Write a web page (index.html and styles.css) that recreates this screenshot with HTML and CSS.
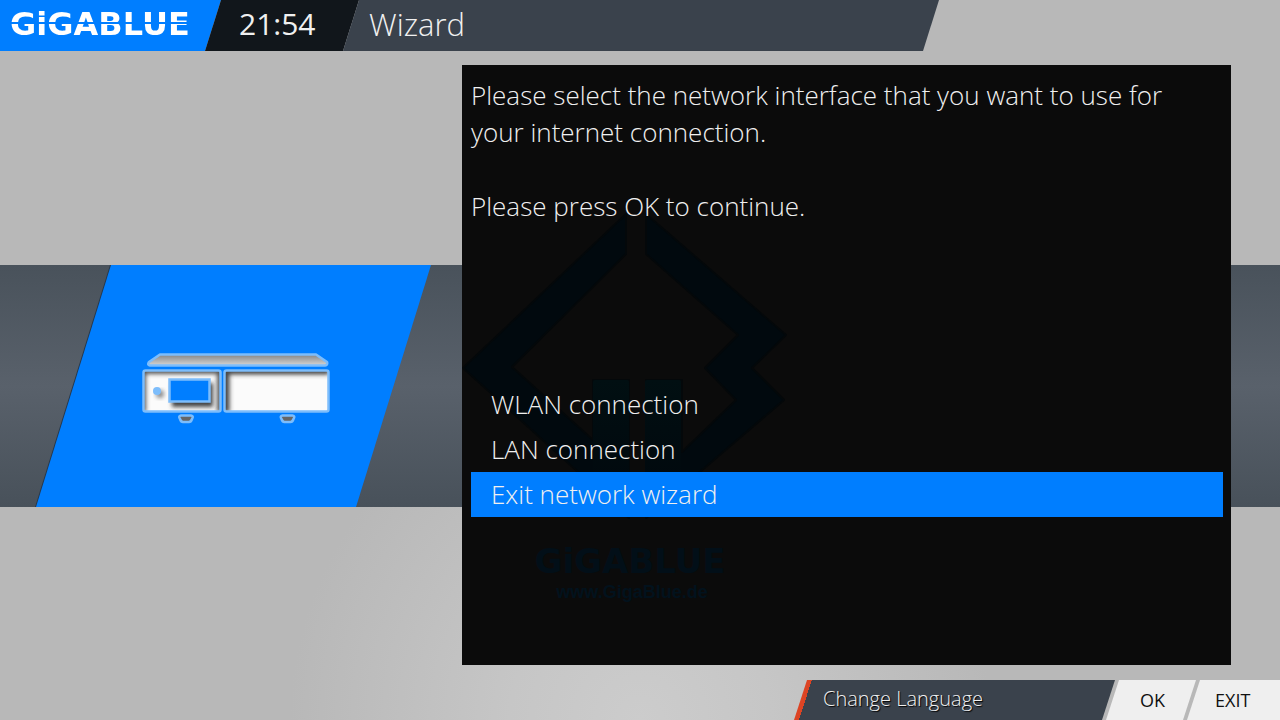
FILE: index.html
```html
<!DOCTYPE html>
<html lang="en">
    <head>
        <meta charset="UTF-8" />
        <title>GigaBlue - Wizard</title>
        <link rel="stylesheet" href="styles.css">
    </head>
    <body>
        <header class="topbar">
            <div class="brand"><span class="brand-name">GiGABLUE</span></div>
            <time class="clock">21:54</time>
            <h1 class="title">Wizard</h1>
        </header>

        <main class="stage">
            <div class="band">
                <div class="tile-edge">
                    <div class="tile">
                        <!-- Receiver -->
                        <svg class="receiver" width="190" height="74" viewBox="142 352 190 74">
                            <defs>
                                <linearGradient id="lid" x1="0" y1="0" x2="0" y2="1">
                                    <stop offset="0" stop-color="#858585" />
                                    <stop offset="1" stop-color="#d6d6d6" />
                                </linearGradient>
                                <filter id="soft" x="-30%" y="-30%" width="160%" height="160%">
                                    <feGaussianBlur stdDeviation="2" />
                                </filter>
                                <clipPath id="left"><rect x="144" y="371" width="77" height="41" /></clipPath>
                                <clipPath id="right"><rect x="226" y="371" width="103" height="41" /></clipPath>
                            </defs>
                            <path d="M161 355.500H317L328 363Q329 366 326 366.500H151Q148 366 150 363Z" fill="url(#lid)" stroke="#7dbdfb" stroke-width="2.500" stroke-linejoin="round" />
                            <g clip-path="url(#left)">
                                <rect x="144" y="371" width="77" height="41" fill="#fbfbfb" />
                                <path d="M143 413V371H222V413" fill="none" stroke="#555" stroke-width="8" filter="url(#soft)" />
                                <rect x="173" y="384" width="41" height="24" fill="#444" filter="url(#soft)" />
                                <circle cx="161" cy="395" r="4" fill="#888" filter="url(#soft)" />
                            </g>
                            <rect x="144.500" y="371.500" width="77" height="41" rx="2" fill="none" stroke="#7dbdfb" stroke-width="2.500" />
                            <circle cx="158" cy="392" r="4" fill="#7dbdfb" />
                            <rect x="170.500" y="380.500" width="40" height="22" fill="#007eff" stroke="#7dbdfb" stroke-width="2.500" />
                            <g clip-path="url(#right)">
                                <rect x="226" y="371" width="103" height="41" fill="#fbfbfb" />
                                <path d="M226 413V371H330" fill="none" stroke="#444" stroke-width="9" filter="url(#soft)" />
                            </g>
                            <rect x="225.500" y="371.500" width="104" height="41" rx="2" fill="none" stroke="#7dbdfb" stroke-width="2.500" />
                            <path d="M182 416.500H192Q195 417 193 420Q192 423 190 423H184Q182 423 181 420Q179 417 182 416.500Z" fill="#666" stroke="#7dbdfb" stroke-width="2.500" />
                            <path d="M283.500 416.500H293.500Q296.500 417 294.500 420Q293.500 423 291.500 423H285.500Q283.500 423 282.500 420Q280.500 417 283.500 416.500Z" fill="#666" stroke="#7dbdfb" stroke-width="2.500" />
                        </svg>
                    </div>
                </div>
            </div>

            <section class="panel">
                <!-- Logo behind the dark panel -->
                <svg class="watermark" width="340" height="600" viewBox="462 65 340 600" aria-hidden="true">
                    <defs>
                        <linearGradient id="pillar" x1="0" y1="0" x2="0" y2="1">
                            <stop offset="0" stop-color="#010f12" />
                            <stop offset="1" stop-color="#01090e" />
                        </linearGradient>
                    </defs>
                    <g fill="#01090e" stroke="#04080a" stroke-width="2" stroke-linejoin="round">
                        <path d="M626 214V254L512 367L593 440V380H629V518L463 368Z" />
                        <path d="M646 214V254L738 335L705 368L736 400L682 452V380H646V518L784 400L752 368L786 335Z" />
                    </g>
                    <g fill="url(#pillar)">
                        <rect x="593" y="380" width="36" height="100" rx="2" />
                        <rect x="645" y="380" width="36" height="100" rx="2" />
                    </g>
                    <text class="mark-name" x="630" y="573" text-anchor="middle">GiGABLUE</text>
                    <text class="mark-url" x="632" y="598" text-anchor="middle">www.GigaBlue.de</text>
                </svg>

                <div class="message">
                    <p>Please select the network interface that you want to use for your internet connection.</p>
                    <p>Please press OK to continue.</p>
                </div>
                <ul class="options">
                    <li><button type="button" class="option">WLAN connection</button></li>
                    <li><button type="button" class="option">LAN connection</button></li>
                    <li><button type="button" class="option selected">Exit network wizard</button></li>
                </ul>
            </section>
        </main>

        <footer class="keys">
            <button type="button" class="key key-red">Change Language</button>
            <button type="button" class="key key-ok">OK</button>
            <button type="button" class="key key-exit">EXIT</button>
        </footer>
    </body>
</html>
```
FILE: styles.css
```css
* {
    box-sizing: border-box;
}
body {
    margin: 0;
    min-height: 100vh;
    display: flex;
    flex-direction: column;
    font-family: "Open Sans", "Noto Sans", sans-serif;
    font-weight: 300;
    color: #f0f0f0;
    background: radial-gradient(circle at 50% 100%, #cccccc 0, #c6c6c6 130px, #b8b8b8 350px);
}
button {
    margin: 0;
    border: none;
    font: inherit;
    color: inherit;
    text-align: left;
    cursor: pointer;
}

/* Top bar */
.topbar {
    display: flex;
    height: 51px;
    line-height: 48px;
}
.brand {
    width: 221px;
    padding-left: 10px;
    background: #007eff;
    clip-path: polygon(0 0, 100% 0, calc(100% - 16px) 100%, 0 100%);
}
.brand-name {
    font-family: "DejaVu Sans", sans-serif;
    font-size: 32px;
    font-weight: bold;
    color: transparent;
    background: linear-gradient(#fff 45%, #007eff 45%, #007eff 50%, #fff 50%);
    background-clip: text;
    -webkit-background-clip: text;
}
.clock {
    width: 154px;
    margin-left: -16px;
    padding-left: 34px;
    font-size: 30px;
    font-weight: 400;
    background: #11161b;
    clip-path: polygon(16px 0, 100% 0, calc(100% - 16px) 100%, 0 100%);
}
.title {
    flex: 0 1 596px;
    margin: 0 0 0 -16px;
    padding-left: 26px;
    font-size: 31px;
    font-weight: 300;
    background: #3a424c;
    clip-path: polygon(16px 0, 100% 0, calc(100% - 16px) 100%, 0 100%);
}

/* Picture band with the wizard panel over it */
.stage {
    flex: 1;
    display: grid;
    grid-template-columns: 462fr 769fr 49fr;
    grid-template-rows: 200fr 242fr 158fr;
    padding: 14px 0 15px;
}
.band {
    grid-area: 2 / 1 / 3 / 4;
    display: flex;
    background: linear-gradient(#49525b, #59616b 50%, #48515a);
}
.tile-edge {
    display: flex;
    margin-left: 36px;
    filter: drop-shadow(-1px 0 0 #26384c);
}
.tile {
    display: flex;
    align-items: center;
    justify-content: center;
    width: 395px;
    padding: 4px 0 0 5px;
    background: #007eff;
    clip-path: polygon(75px 0, 100% 0, calc(100% - 75px) 100%, 0 100%);
}
.panel {
    grid-area: 1 / 2 / 4 / 3;
    position: relative;
    display: flex;
    flex-direction: column;
    padding: 12px 8px 148px 9px;
    font-size: 26px;
    background: #0b0b0b;
}
.watermark {
    position: absolute;
    top: 0;
    left: 0;
}
.mark-name {
    font: bold 34px "DejaVu Sans", sans-serif;
    fill: #020f18;
}
.mark-url {
    font: bold 18px "Liberation Sans", sans-serif;
    fill: #02121d;
}
.message {
    position: relative;
    padding-right: 40px;
    line-height: 37px;
}
.message p {
    margin: 0 0 37px;
}
.options {
    position: relative;
    margin: auto 0 0;
    padding: 0;
    list-style: none;
}
.option {
    display: block;
    width: 100%;
    height: 45px;
    padding: 0 20px;
    line-height: 45px;
    background: none;
}
.option.selected {
    background: #007eff;
}

/* Remote control keys */
.keys {
    display: flex;
    justify-content: flex-end;
    height: 40px;
    font-size: 18px;
}
.key {
    background: #efefef;
    clip-path: polygon(13px 0, 100% 0, calc(100% - 13px) 100%, 0 100%);
}
.key-red {
    width: 321px;
    padding: 0 29px 4px;
    font-size: 20px;
    background: linear-gradient(108deg, #dc4424 17px, #3a424c 17px);
    text-shadow: 1px 1px 1px #000;
}
.key-ok {
    width: 90px;
    margin-left: -9px;
    padding: 0 0 0 34px;
    font-weight: 400;
    color: #111;
}
.key-exit {
    width: 93px;
    margin-left: -9px;
    padding: 0 0 0 28px;
    font-weight: 400;
    color: #111;
    clip-path: polygon(13px 0, 100% 0, 100% 100%, 0 100%);
}
```
